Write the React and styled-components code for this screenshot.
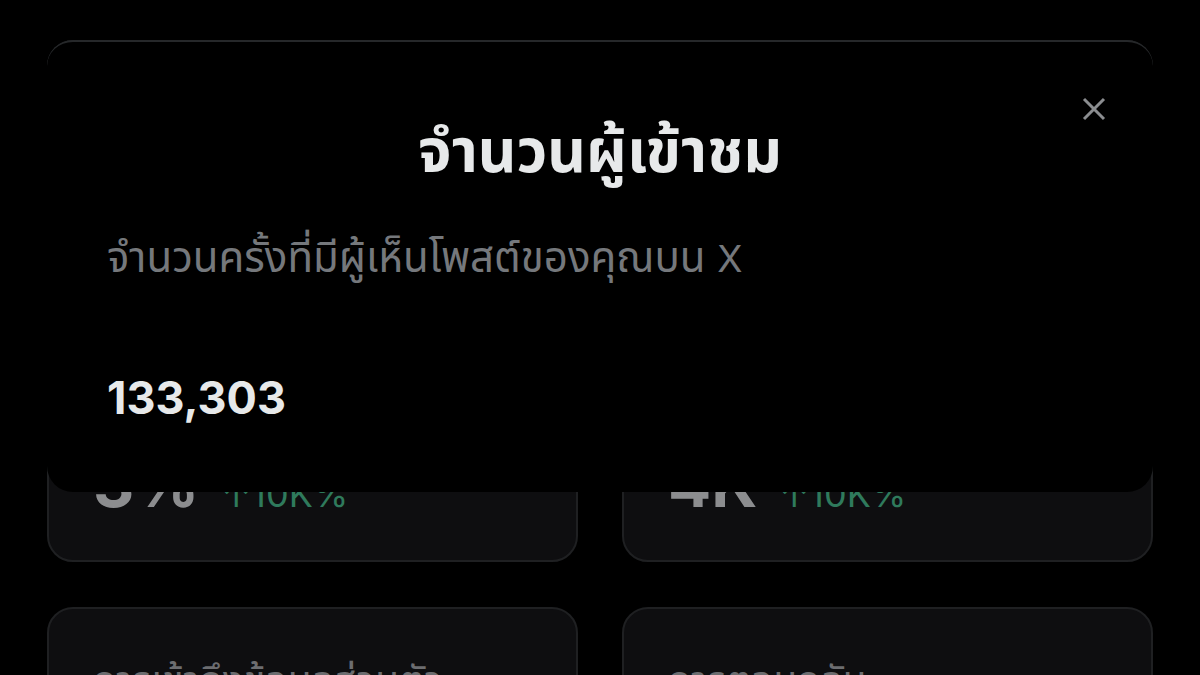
import styled, { createGlobalStyle } from 'styled-components'

const GlobalStyle = createGlobalStyle`
  html, body {
    margin: 0;
    padding: 0;
    background: #000;
  }
  body {
    font-family: Inter, "Noto Sans", "Noto Sans Thai", "DejaVu Sans", sans-serif;
  }
`

const stats = [
  { label: 'อัตราการมีส่วนร่วม', value: '3%', delta: '10K%' },
  { label: 'ผู้ติดตามใหม่', value: '4K', delta: '10K%' },
]

const links = ['การเข้าถึงข้อมูลส่วนตัว', 'การตอบกลับ']

export default function App() {
  return (
    <>
      <GlobalStyle />
      <Screen>
        <Grid>
          {stats.map((s) => (
            <StatCard key={s.value}>
              <CardLabel>{s.label}</CardLabel>
              <ValueRow>
                <Value>{s.value}</Value>
                <Delta>↑{s.delta}</Delta>
              </ValueRow>
            </StatCard>
          ))}
          {links.map((l) => (
            <LinkCard key={l}>
              <LinkText>{l}</LinkText>
              <Chevron viewBox="0 0 24 24">
                <path d="M8 3 L17 12 L8 21" />
              </Chevron>
            </LinkCard>
          ))}
        </Grid>

        <Sheet>
          <CloseButton aria-label="close">
            <svg viewBox="0 0 24 24" width="30" height="30">
              <path d="M4 4 L20 20 M20 4 L4 20" />
            </svg>
          </CloseButton>
          <Title>จำนวนผู้เข้าชม</Title>
          <Subtitle>
            จำนวนครั้งที่มีผู้เห็นโพสต์ของคุณบน <Latin>X</Latin>
          </Subtitle>
          <Count>133,303</Count>
        </Sheet>
      </Screen>
    </>
  )
}

const Screen = styled.div`
  position: relative;
  width: 1200px;
  height: 675px;
  overflow: hidden;
  background: #000;
`

const Grid = styled.div`
  display: grid;
  grid-template-columns: 531px 531px;
  grid-template-rows: 522px 200px;
  column-gap: 44px;
  row-gap: 45px;
  padding: 40px 47px 0;
`

const Card = styled.div`
  box-sizing: border-box;
  background: #0e0e10;
  border: 2px solid #1f2022;
  border-radius: 26px;
`

const StatCard = styled(Card)`
  display: flex;
  flex-direction: column;
  justify-content: space-between;
  padding: 44px 44px 44px;
`

const CardLabel = styled.div`
  font-size: 38px;
  color: #6e6f71;
`

const ValueRow = styled.div`
  display: flex;
  align-items: baseline;
  gap: 22px;
`

const Value = styled.span`
  font-family: Inter, "Liberation Sans", sans-serif;
  font-weight: 700;
  font-size: 64px;
  line-height: 1;
  color: #8c8d8f;
`

const Delta = styled.span`
  font-family: Inter, "Liberation Sans", sans-serif;
  font-size: 36px;
  line-height: 1;
  color: #2f7a5c;
`

const LinkCard = styled(Card)`
  display: flex;
  align-items: flex-start;
  justify-content: space-between;
  padding: 46px 28px 0 44px;
`

const LinkText = styled.div`
  font-size: 39px;
  line-height: 50px;
  color: #6c6d70;
`

const Chevron = styled.svg`
  width: 26px;
  height: 40px;
  margin-top: 20px;
  fill: none;
  stroke: #5e5f62;
  stroke-width: 2;
`

const Sheet = styled.div`
  position: absolute;
  left: 47px;
  top: 40px;
  box-sizing: border-box;
  width: 1106px;
  height: 452px;
  padding: 74px 60px 0;
  display: flex;
  flex-direction: column;
  background: #000;
  border-top: 2px solid #26282a;
  border-radius: 26px;
`

const CloseButton = styled.button`
  position: absolute;
  top: 52px;
  right: 44px;
  padding: 0;
  border: none;
  background: none;
  svg {
    display: block;
    fill: none;
    stroke: #8b8d90;
    stroke-width: 2.4;
  }
`

const Title = styled.h1`
  margin: 0;
  text-align: center;
  font-size: 60px;
  line-height: 68px;
  font-weight: 700;
  color: #e7e9ea;
`

const Subtitle = styled.p`
  margin: 52px 0 0;
  font-size: 42px;
  line-height: 42px;
  color: #75787c;
`

const Latin = styled.span`
  font-size: 37px;
`

const Count = styled.div`
  margin-top: 94px;
  font-family: Inter, "Liberation Sans", sans-serif;
  font-weight: 700;
  font-size: 45px;
  line-height: 48px;
  color: #e7e9ea;
`
